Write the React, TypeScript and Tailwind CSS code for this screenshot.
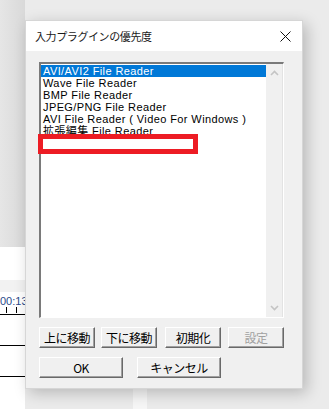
import React from 'react';

const ITEMS = [
  'AVI/AVI2 File Reader',
  'Wave File Reader',
  'BMP File Reader',
  'JPEG/PNG File Reader',
  'AVI File Reader ( Video For Windows )',
  '拡張編集 File Reader',
];

const uiFont = { fontFamily: '"Liberation Sans", "Noto Sans CJK JP", sans-serif' };
const jpFont = { fontFamily: '"Noto Sans CJK JP", sans-serif' };

function Btn({ label, w, disabled, ml }: { label: string; w: string; disabled?: boolean; ml?: string }) {
  return (
    <div
      className={`${w} ${ml ?? ''} h-[21px] flex items-center justify-center bg-[#f0f0f0] border border-t-white border-l-white border-b-[#696969] border-r-[#696969] shadow-[inset_-1px_-1px_0_#a0a0a0] text-[12px] tracking-[-0.5px] leading-none ${
        disabled ? 'text-[#a0a0a0]' : 'text-black'
      }`}
    >
      {label}
    </div>
  );
}

export default function App() {
  return (
    <div className="relative w-[329px] h-[409px] overflow-hidden bg-[#ebebeb]" style={uiFont}>
      {/* app behind the dialog */}
      <div className="absolute left-0 top-0 w-[25px] h-[409px] flex flex-col">
        <div className="h-[247px] bg-gradient-to-r from-[#e6e6e6] to-[#d9d9d9]" />
        <div className="h-[33px] bg-white" />
        <div className="h-[12px] bg-[#f2f2f2]" />
        <div className="h-[22px] bg-white relative">
          <span className="absolute left-0 top-[1px] text-[11px] text-[#2a4a8a]">00:13</span>
          <span className="absolute left-[6px] bottom-[1px] w-px h-[6px] bg-black" />
          <span className="absolute left-[16px] bottom-[1px] w-px h-[6px] bg-black" />
        </div>
        <div className="h-px bg-black" />
        <div className="h-[30px] bg-white" />
        <div className="h-px bg-black" />
        <div className="h-[30px] bg-white" />
        <div className="h-px bg-black" />
        <div className="flex-1 bg-white" />
      </div>
      <div className="absolute left-[133px] top-[385px] w-[14px] h-[24px] bg-[#f6f6f6]" />

      {/* dialog */}
      <div className="absolute left-[25px] top-[20px] w-[278px] h-[369px] bg-[#f0f0f0] border border-[#d6d6d6] shadow-[4px_4px_14px_rgba(0,0,0,0.22)] flex flex-col">
        <div className="h-[30px] bg-white flex items-center justify-between pl-[9px] pr-[10px]">
          <span className="text-[11px] tracking-[-0.4px] text-[#1a1a1a]" style={jpFont}>
            入力プラグインの優先度
          </span>
          <svg width="11" height="11" viewBox="0 0 11 11" className="mr-[1px]">
            <path d="M0.5 0.5L10.5 10.5M10.5 0.5L0.5 10.5" stroke="#111" strokeWidth="1" />
          </svg>
        </div>

        <div className="flex flex-col pl-[13px] pt-[11px]">
          {/* listbox */}
          <div className="relative w-[245px] h-[256px] bg-white border-t-2 border-l-2 border-t-[#7a7a7a] border-l-[#7a7a7a] border-b border-r border-b-white border-r-white flex">
            <div className="flex-1 flex flex-col pt-[1px]">
              {ITEMS.map((t, i) => (
                <div
                  key={t}
                  className={`h-[12px] flex items-center pl-[2px] text-[11px] tracking-[0.4px] leading-none whitespace-nowrap ${
                    i === 0 ? 'bg-[#0078d7] text-white' : 'text-black'
                  }`}
                >
                  {t}
                </div>
              ))}
            </div>
            <div className="w-[17px] bg-[#f0f0f0] flex flex-col justify-between items-center py-[6px] border-r border-[#e3e3e3]">
              <svg width="9" height="6" viewBox="0 0 9 6">
                <path d="M1 5L4.5 1.5L8 5" stroke="#c4c4c4" strokeWidth="1.6" fill="none" />
              </svg>
              <svg width="9" height="6" viewBox="0 0 9 6">
                <path d="M1 1L4.5 4.5L8 1" stroke="#c4c4c4" strokeWidth="1.6" fill="none" />
              </svg>
            </div>
            {/* annotation */}
            <div className="absolute left-[-3px] top-[70px] w-[160px] h-[20px] border-[5px] border-[#ed1c24]" />
          </div>

          <div className="flex mt-[9px]" style={jpFont}>
            <Btn label="上に移動" w="w-[56px]" />
            <Btn label="下に移動" w="w-[56px]" ml="ml-[6px]" />
            <Btn label="初期化" w="w-[56px]" ml="ml-[8px]" />
            <Btn label="設定" w="w-[56px]" ml="ml-[7px]" disabled />
          </div>
          <div className="flex mt-[9px]" style={jpFont}>
            <Btn label="OK" w="w-[84px]" />
            <Btn label="キャンセル" w="w-[84px]" ml="ml-[14px]" />
          </div>
        </div>
      </div>
    </div>
  );
}
